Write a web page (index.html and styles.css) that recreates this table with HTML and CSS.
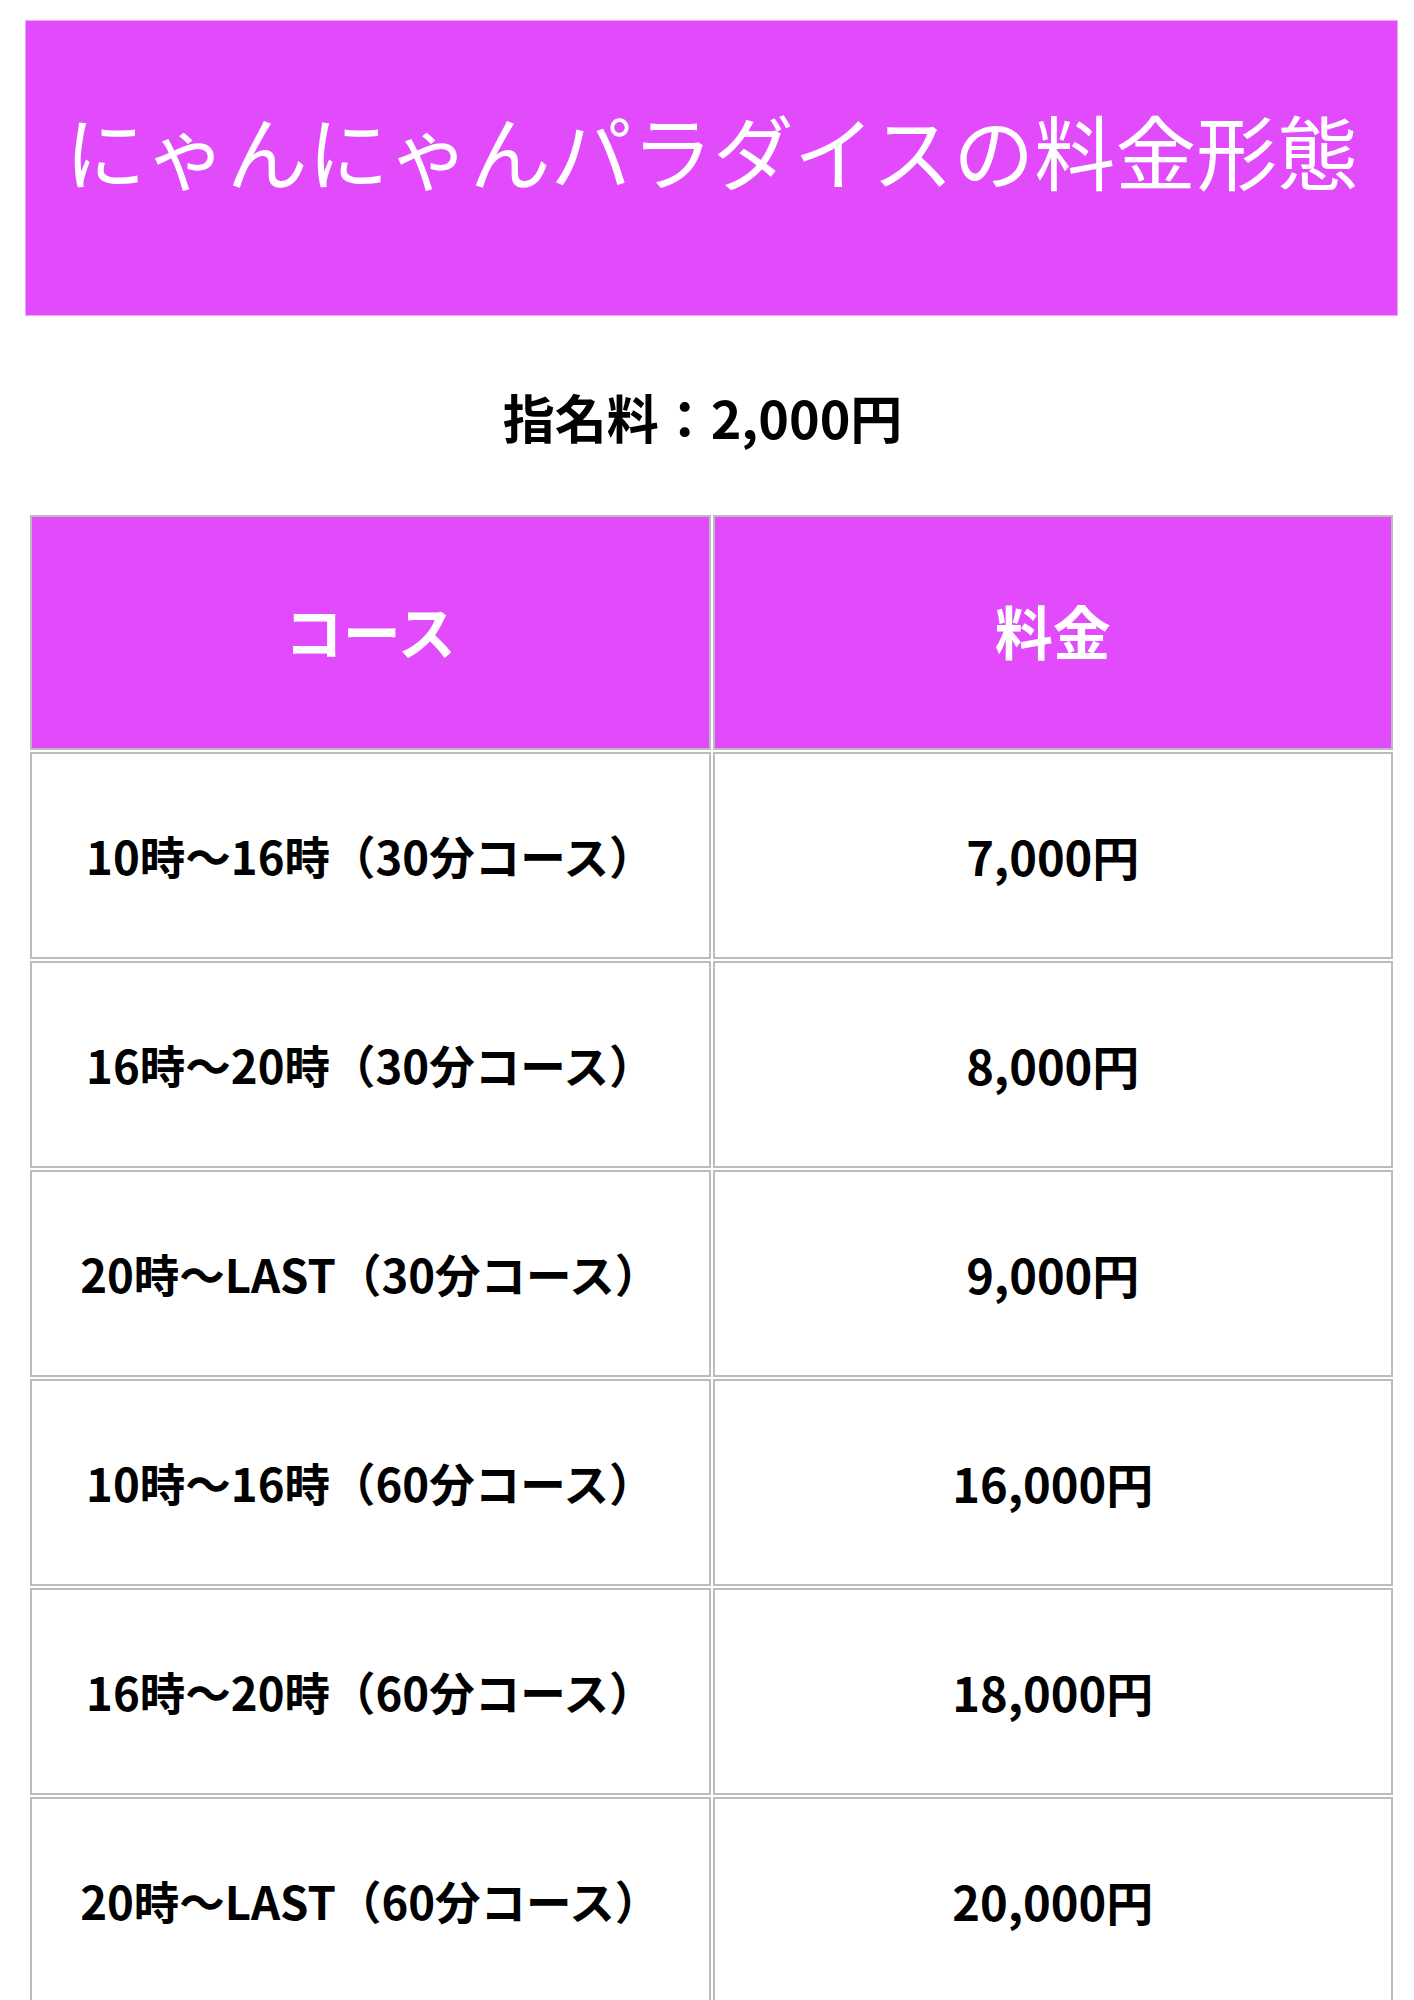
FILE: index.html
```html
<!DOCTYPE html>
<html lang="ja">
<head>
<meta charset="utf-8">
<title>にゃんにゃんパラダイスの料金形態</title>
<link rel="stylesheet" href="styles.css">
</head>
<body>
<div class="page">
  <h2 class="title">にゃんにゃんパラダイスの料金形態</h2>
  <p class="fee">指名料：2,000円</p>
  <table class="price">
    <thead>
      <tr><th>コース</th><th>料金</th></tr>
    </thead>
    <tbody>
      <tr><td class="course">10時〜16時（30分コース）</td><td class="amount">7,000円</td></tr>
      <tr><td class="course">16時〜20時（30分コース）</td><td class="amount">8,000円</td></tr>
      <tr><td class="course">20時〜LAST（30分コース）</td><td class="amount">9,000円</td></tr>
      <tr><td class="course">10時〜16時（60分コース）</td><td class="amount">16,000円</td></tr>
      <tr><td class="course">16時〜20時（60分コース）</td><td class="amount">18,000円</td></tr>
      <tr><td class="course">20時〜LAST（60分コース）</td><td class="amount">20,000円</td></tr>
    </tbody>
  </table>
</div>
</body>
</html>
```

FILE: styles.css
```css
html, body {
  margin: 0;
  padding: 0;
  background: #ffffff;
}

body {
  font-family: "Noto Sans CJK JP", "Noto Sans", sans-serif;
  color: #000000;
}

.page {
  padding: 20px 0 0 0;
}

.title {
  box-sizing: border-box;
  margin: 0 16px 0 25px;
  height: 296px;
  padding-bottom: 40px;
  display: flex;
  align-items: center;
  justify-content: center;
  background: #e14bfb;
  border: 1px solid #e9a3f7;
  color: #ffffff;
  font-size: 81px;
  font-weight: 400;
  line-height: 1;
  white-space: nowrap;
}

.fee {
  margin: 0;
  padding: 75px 9px 0 0;
  height: 197px;
  box-sizing: border-box;
  text-align: center;
  font-size: 52px;
  font-weight: 700;
  line-height: 1;
}

.price {
  margin: 0 19px 0 28px;
  width: 1367px;
  border-collapse: separate;
  border-spacing: 2px;
  table-layout: fixed;
}

.price th,
.price td {
  border: 2px solid #bcbcbc;
  text-align: center;
  vertical-align: middle;
  padding: 0;
  font-weight: 700;
  line-height: 1;
  box-sizing: border-box;
}

.price th {
  height: 235px;
  padding-bottom: 5px;
  background: #e14bfb;
  color: #ffffff;
  font-size: 58px;
}

.price td {
  height: 207px;
  background: #ffffff;
  color: #000000;
}

.price .course {
  font-size: 45.5px;
}

.price .amount {
  font-size: 47px;
}
```
